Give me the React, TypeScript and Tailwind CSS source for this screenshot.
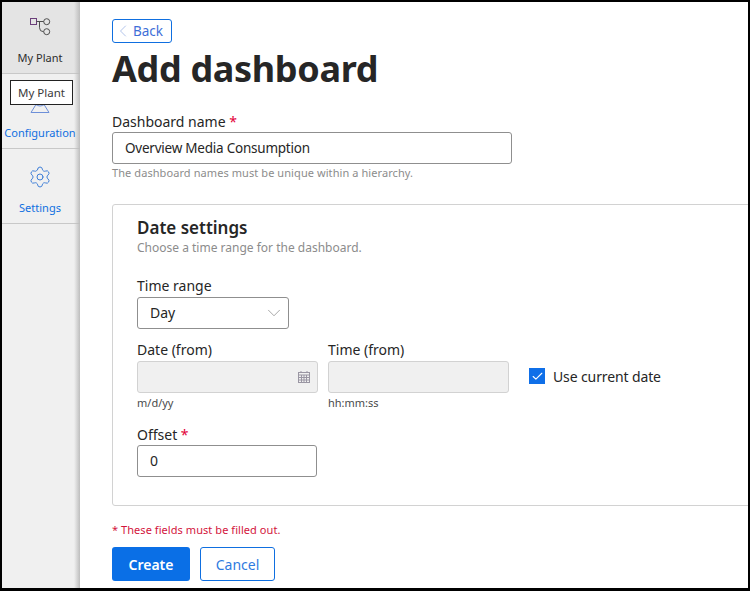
import React from 'react';
import { Check, ChevronDown, ChevronLeft, Settings } from 'lucide-react';

const PlantIcon = () => (
  <svg width="24" height="24" viewBox="0 0 24 24" fill="none" strokeWidth="1" stroke="#4f4f4f">
    <rect x="2.5" y="3.5" width="6" height="6" stroke="#6b3f7a" />
    <circle cx="18.700" cy="6.700" r="3" />
    <circle cx="18.700" cy="16.700" r="3" />
    <path d="M8.500 6.500h7.200M11.500 6.500v6.200a4 4 0 0 0 4 4h.2" />
  </svg>
);

const ConfigIcon = () => (
  <svg width="24" height="24" viewBox="0 0 24 24" fill="none" stroke="#6d8fd8" strokeWidth="1">
    <circle cx="12" cy="9" r="7" />
    <path d="M12 8 3 22.500h18z" />
  </svg>
);

const CalendarIcon = () => (
  <svg width="12" height="12" viewBox="0 0 12 12" fill="none" stroke="#9a96a3" strokeWidth="1">
    <rect x="0.500" y="1.500" width="11" height="10" />
    <path d="M0.500 4h11M0.500 6.500h11M0.500 9h11M3.500 4v7M6 4v7M8.500 4v7M3 0v2M9 0v2" />
  </svg>
);

const NavItem = ({
  icon,
  label,
  active = false,
}: {
  icon: React.ReactNode;
  label: string;
  active?: boolean;
}) => (
  <div
    className={`flex h-[75px] flex-col items-center border-b border-[#c8c8c8] pt-[16px] pr-[2px] ${
      active ? 'bg-[#e4e4e4] text-[#2d2d2d]' : 'text-[#0f6fe0]'
    }`}
  >
    <div className="h-6">{icon}</div>
    <span className="mt-[11px] text-[11px] leading-[16px] whitespace-nowrap">{label}</span>
  </div>
);

const Required = () => <span className="text-[#e3003a]"> *</span>;

export default function App() {
  return (
    <div
      className="flex h-[591px] w-[750px] overflow-hidden border-t-2 border-r-2 border-b-[3px] border-l-2 border-black bg-white text-[#262626]"
      style={{ fontFamily: '"Noto Sans", sans-serif' }}
    >
      <aside className="relative w-[78px] shrink-0 bg-[#f0f0f0]">
        <div className="-mt-[3px]">
          <NavItem active icon={<PlantIcon />} label="My Plant" />
          <NavItem icon={<ConfigIcon />} label="Configuration" />
          <NavItem icon={<Settings size={24} strokeWidth={1} className="text-[#3f7fd8]" />} label="Settings" />
        </div>
        <div className="absolute inset-y-0 right-0 w-[6px] bg-gradient-to-r from-transparent to-[#bdbdbd]" />
        <div className="absolute top-[78px] left-2 flex h-[25px] w-[63px] items-center justify-center border border-[#222] bg-white text-[11.500px] text-[#3a3a3a]">
          My Plant
        </div>
      </aside>

      <main className="min-w-0 flex-1 overflow-hidden pt-[17px] pl-8">
        <button className="flex h-6 w-[60px] items-center rounded-[3px] border border-[#0f6fe0] text-[13.500px] text-[#3f6fd8]">
          <ChevronLeft size={20} strokeWidth={0.8} className="text-[#8aa4e0]" />
          Back
        </button>
        <h1 className="mt-[4px] text-[36px] leading-[44px] font-bold tracking-[-0.340px] text-[#262626]">Add dashboard</h1>

        <label className="mt-[21px] block text-[14px] leading-[19px]">
          Dashboard name
          <Required />
        </label>
        <div className="mt-[1px] flex h-8 w-[400px] items-center rounded-[3px] border border-[#8f8f8f] pl-3 text-[13.500px] tracking-[-0.230px]">
          Overview Media Consumption
        </div>
        <p className="mt-[1px] text-[11px] leading-[15px] tracking-[0.080px] text-[#8c8c8c]">
          The dashboard names must be unique within a hierarchy.
        </p>

        <section className="mt-[24px] -mr-4 h-[302px] rounded-l-[3px] border border-[#d2d2d2] pt-[11px] pl-6">
          <h2 className="text-[17px] leading-[24px] font-semibold">Date settings</h2>
          <p className="text-[12px] leading-[16px] text-[#8c8c8c]">Choose a time range for the dashboard.</p>

          <label className="mt-[21px] block text-[14px] leading-[18px]">Time range</label>
          <div className="mt-[2px] flex h-8 w-[152px] items-center justify-between rounded-[3px] border border-[#8f8f8f] pr-[3px] pl-3 text-[14px]">
            <span className="-mt-px">Day</span>
            <ChevronDown size={22} strokeWidth={0.7} className="text-[#777]" />
          </div>

          <div className="mt-[12px] flex">
            <div className="w-[181px]">
              <label className="block text-[14px] leading-[18px]">Date (from)</label>
              <div className="mt-[2px] flex h-8 items-center justify-end rounded-[3px] border border-[#d2d2d2] bg-[#f0f0f0] pr-[7px]">
                <CalendarIcon />
              </div>
              <p className="mt-[3px] text-[11px] leading-[14px] text-[#4a4a4a]">m/d/yy</p>
            </div>
            <div className="ml-[10px] w-[181px]">
              <label className="block text-[14px] leading-[18px]">Time (from)</label>
              <div className="mt-[2px] h-8 rounded-[3px] border border-[#d2d2d2] bg-[#f0f0f0]" />
              <p className="mt-[3px] text-[11px] leading-[14px] text-[#4a4a4a]">hh:mm:ss</p>
            </div>
            <div className="mt-[19px] ml-[20px] flex h-8 items-center">
              <span className="flex h-4 w-4 items-center justify-center bg-[#0f6fe8]">
                <Check size={13} strokeWidth={2} className="text-white" />
              </span>
              <span className="ml-2 text-[14px] tracking-[-0.120px]">Use current date</span>
            </div>
          </div>

          <label className="mt-[16px] block text-[14px] leading-[17px]">
            Offset
            <Required />
          </label>
          <div className="mt-[2px] flex h-8 w-[180px] items-center rounded-[3px] border border-[#8f8f8f] pl-3 text-[14px]">
            <span className="-mt-px">0</span>
          </div>
        </section>

        <p className="mt-[16px] text-[11px] leading-[15px] tracking-[0.060px] text-[#d3143c]">* These fields must be filled out.</p>
        <div className="mt-[10px] flex gap-[10px]">
          <button className="flex h-[34px] w-[78px] items-center justify-center rounded-[3px] bg-[#0a6fe6] text-[14px] font-semibold text-white">
            Create
          </button>
          <button className="flex h-[34px] w-[75px] items-center justify-center rounded-[3px] border border-[#0f6fe0] text-[14px] text-[#2f7be0]">
            Cancel
          </button>
        </div>
      </main>
    </div>
  );
}
